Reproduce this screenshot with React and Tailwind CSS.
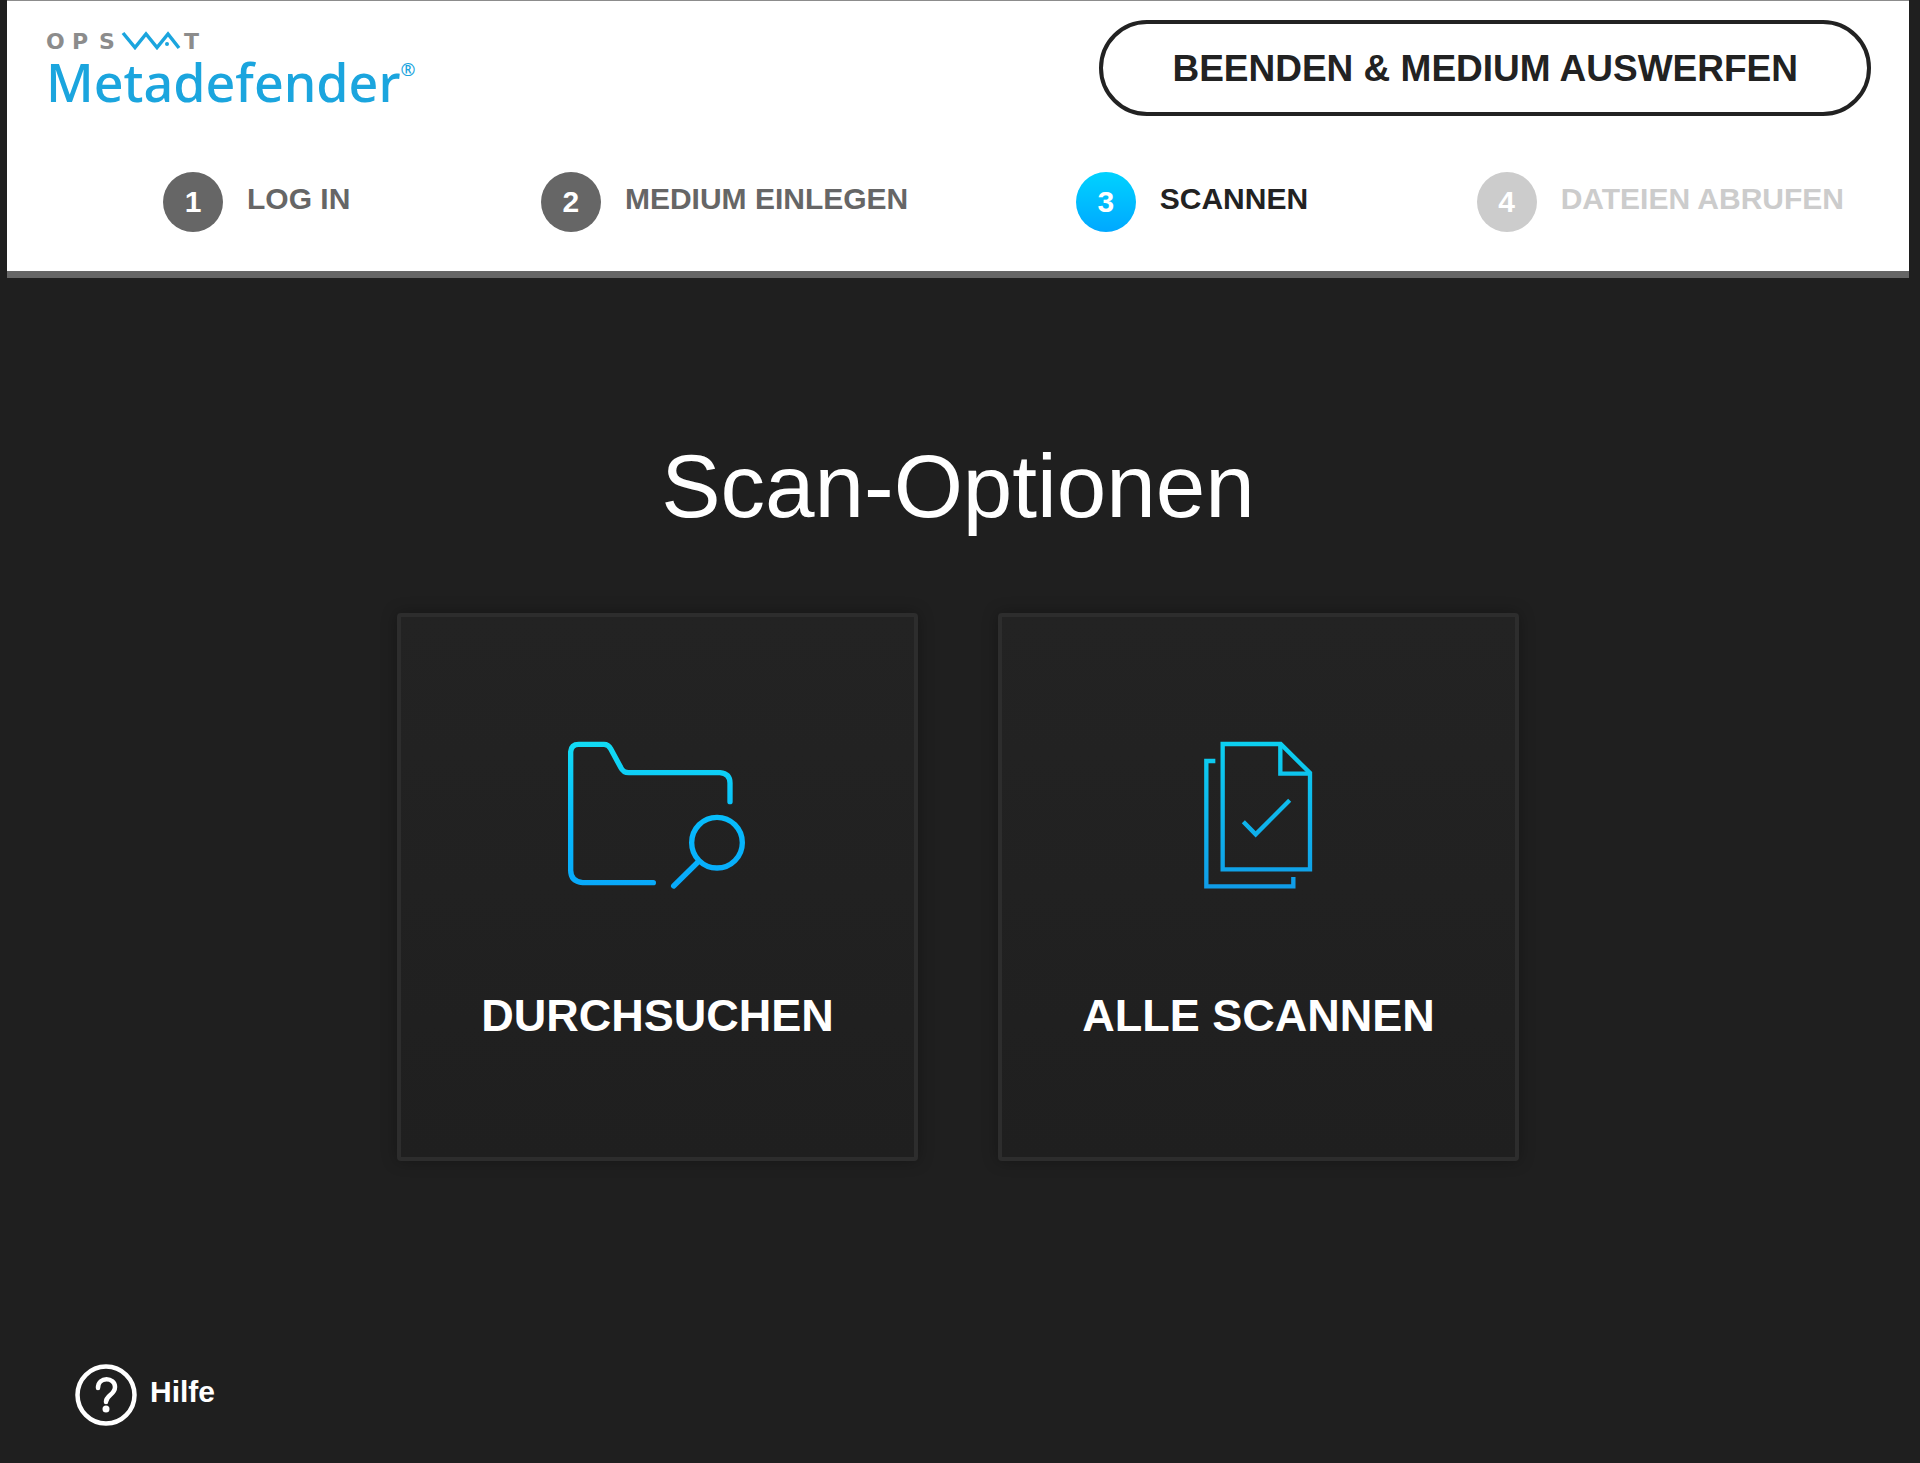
import clsx from 'clsx';

const STEPS = [
  { id: 1, label: 'LOG IN', state: 'done' },
  { id: 2, label: 'MEDIUM EINLEGEN', state: 'done' },
  { id: 3, label: 'SCANNEN', state: 'active' },
  { id: 4, label: 'DATEIEN ABRUFEN', state: 'pending' },
];

function Logo() {
  return (
    <div className="text-[#1ba5de]">
      <svg viewBox="0 0 158 28" className="block w-[158px] h-7" aria-label="OPSWAT">
        <g fill="#8c8c8c" fontFamily="DejaVu Sans" fontSize="22" fontWeight="700">
          <text x="0 26 53" y="22">OPS</text>
          <text x="138" y="22">T</text>
        </g>
        <path d="M77 6 L89 20.500 L100 7 L111 20.500 L122 7 L133 21" fill="none" stroke="#1ba5de" strokeWidth="3.500" />
        <circle cx="121" cy="17" r="2" fill="#1ba5de" />
      </svg>
      <div className="flex items-start font-['Noto_Sans'] font-medium text-[52px] leading-[54px]">
        Metadefender
        <span className="text-[18px] leading-7">®</span>
      </div>
    </div>
  );
}

function Step({ id, label, state }) {
  return (
    <li className="flex items-center gap-6">
      <span
        className={clsx(
          'flex items-center justify-center w-[60px] h-[60px] rounded-full text-[30px] leading-none text-white',
          state === 'done' && 'bg-[#666666]',
          state === 'active' && 'bg-linear-to-b from-[#00d2ff] to-[#00a8ff]',
          state === 'pending' && 'bg-[#cccccc]'
        )}
      >
        {id}
      </span>
      <span
        className={clsx(
          'pb-1.5 text-[30px] leading-9 whitespace-nowrap',
          state === 'done' && 'text-[#666666]',
          state === 'active' && 'text-[#222222]',
          state === 'pending' && 'text-[#cccccc]'
        )}
      >
        {label}
      </span>
    </li>
  );
}

function FolderSearchIcon() {
  return (
    <svg viewBox="82 62 540 444" className="w-[180px] h-[148px]" fill="none" stroke="url(#folder)" strokeWidth="16" strokeLinecap="round">
      <defs>
        <linearGradient id="folder" gradientUnits="userSpaceOnUse" x1="0" y1="62" x2="0" y2="505">
          <stop offset="0" stopColor="#12dcf4" />
          <stop offset="0.600" stopColor="#06b8fc" />
          <stop offset="1" stopColor="#08a8fa" />
        </linearGradient>
      </defs>
      <path d="M338 487 H126 Q90 484 90 450 V94 Q92 72 114 72 H190 Q203 72 210 85 L240 141 Q248 157 264 157 H538 Q568 160 568 188 V244" />
      <circle cx="529" cy="367" r="76" />
      <path d="M472 425 L399 497" />
    </svg>
  );
}

function DocumentsCheckIcon() {
  return (
    <svg viewBox="72 62 330 444" className="w-[110px] h-[148px]" fill="none" stroke="url(#docs)" strokeWidth="13">
      <defs>
        <linearGradient id="docs" gradientUnits="userSpaceOnUse" x1="0" y1="62" x2="0" y2="505">
          <stop offset="0" stopColor="#0cd0f0" />
          <stop offset="1" stopColor="#109ce8" />
        </linearGradient>
      </defs>
      <path d="M128 71 H302 L390 158 V447 H128 Z" />
      <path d="M301 71 V160 H390" />
      <path d="M106 122 H79 V498 H340 V470" />
      <path d="M190 304 L227 342 L329 240" />
    </svg>
  );
}

function OptionCard({ icon, label }) {
  return (
    <button className="flex flex-col items-center w-[521px] h-[548px] pt-[124px] rounded-sm border-4 border-[#2d2d2d] bg-linear-to-b from-[#232323] to-[#1f1f1f] shadow-[0_0_16px_rgba(0,0,0,0.3)]">
      {icon}
      <span className="mt-[99px] text-[45px] leading-[56px] font-bold text-white">{label}</span>
    </button>
  );
}

export default function App() {
  return (
    <div className="flex flex-col min-h-screen pl-[7px] pr-[11px] bg-[#1f1f1f] font-['Liberation_Sans',sans-serif]">
      <header className="pt-[19px] border-t border-t-[#8c8c8c] border-b-[7px] border-b-[#666666] bg-white font-bold">
        <div className="flex items-start justify-between pl-[39px] pr-[38px]">
          <div className="pt-[7px]">
            <Logo />
          </div>
          <button className="h-24 px-[69px] rounded-full border-4 border-[#222222] text-[37px] leading-none text-[#222222]">
            BEENDEN &amp; MEDIUM AUSWERFEN
          </button>
        </div>
        <ol className="grid grid-cols-[378fr_535fr_401fr_367fr] mt-14 mb-[39px] pl-[156px] pr-[65px]">
          {STEPS.map(s => <Step key={s.id} {...s} />)}
        </ol>
      </header>

      <main className="flex flex-col flex-1 items-center pt-[156px]">
        <h1 className="text-[89px] leading-[104px] text-white">Scan-Optionen</h1>
        <div className="flex gap-20 mt-[75px]">
          <OptionCard icon={<FolderSearchIcon />} label="DURCHSUCHEN" />
          <OptionCard icon={<DocumentsCheckIcon />} label="ALLE SCANNEN" />
        </div>
      </main>

      <footer className="flex pl-[68px] pb-[37px]">
        <button className="flex items-center gap-[13px] text-white">
          <svg viewBox="0 0 62 62" className="w-[62px] h-[62px]" fill="none" stroke="currentColor" strokeLinecap="round">
            <circle cx="31" cy="31" r="28.500" strokeWidth="4.500" />
            <path d="M23 24 C23 12 40 13 40 23 C40 31 31 31 31 38" strokeWidth="4.500" />
            <circle cx="31" cy="45" r="3.500" fill="currentColor" stroke="none" />
          </svg>
          <span className="pb-1.5 text-[30px] leading-9 font-bold">Hilfe</span>
        </button>
      </footer>
    </div>
  );
}
